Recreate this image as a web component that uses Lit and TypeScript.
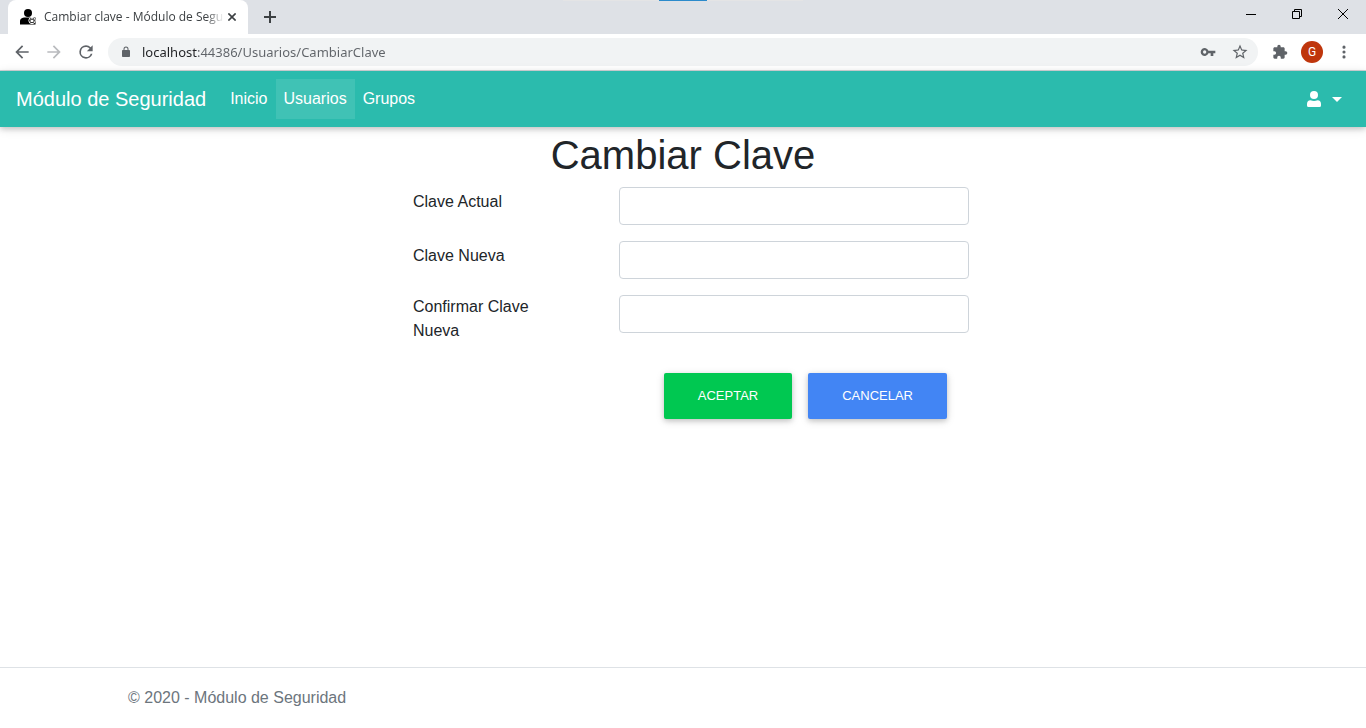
import { LitElement, html, css, svg } from "lit";
import { customElement, property } from "lit/decorators.js";

@customElement("browser-bar")
class BrowserBar extends LitElement {
  @property() pageTitle = "";
  @property() address = "";

  static styles = css`
    :host {
      display: block;
      font-family: "Open Sans", "Noto Sans", sans-serif;
      color: #3c4043;
    }
    * { box-sizing: border-box; }
    svg { display: block; }
    button {
      display: grid;
      place-items: center;
      flex: none;
      margin: 0;
      padding: 0;
      border: 0;
      background: none;
      color: #5f6368;
      font: inherit;
    }
    .strip {
      position: relative;
      display: flex;
      height: 34px;
      padding-left: 8px;
      background: #dee1e6;
    }
    .loading {
      position: absolute;
      top: 0;
      left: calc(50% - 120px);
      width: 240px;
      height: 1px;
      background: linear-gradient(90deg, #e4e4e5 40%, #2b8acb 40% 60%, #e4e4e5 60%);
    }
    .tab {
      display: flex;
      align-items: center;
      width: 240px;
      padding: 0 8px 0 12px;
      border-radius: 8px 8px 0 0;
      background: #fff;
    }
    .title {
      flex: 1;
      margin: 0 0 0 8px;
      overflow: hidden;
      white-space: nowrap;
      font-size: 12px;
      line-height: 16px;
      mask-image: linear-gradient(90deg, #000 90%, transparent);
    }
    .close { width: 16px; height: 16px; color: #3c4043; }
    .add { width: 44px; height: 34px; color: #3c4043; }
    .window { display: flex; margin-left: auto; }
    .window button { width: 46px; height: 28px; color: #000; }
    .tools {
      display: flex;
      align-items: center;
      height: 37px;
      padding: 0 6px;
      border-bottom: 1px solid #d5d7da;
      background: #fff;
    }
    .tools button { width: 32px; height: 32px; }
    .tools .forward { color: #b9bbbe; }
    .omnibox {
      display: flex;
      flex: 1;
      align-items: center;
      height: 28px;
      margin: 0 6px;
      padding: 0 2px 0 12px;
      border-radius: 14px;
      background: #f1f3f4;
      color: #5f6368;
    }
    .omnibox input {
      flex: 1;
      min-width: 0;
      height: 24px;
      margin-left: 10px;
      padding: 0;
      border: 0;
      outline: 0;
      color: #5f6368;
      background: linear-gradient(90deg, #202124 55px, #5f6368 55px);
      -webkit-background-clip: text;
      background-clip: text;
      -webkit-text-fill-color: transparent;
      font: 13px/24px "Noto Sans", "Open Sans", sans-serif;
    }
    .avatar {
      display: grid;
      place-items: center;
      width: 22px;
      height: 22px;
      border-radius: 50%;
      background: #bf360c;
      color: #fff;
      font: 12px/22px Roboto, sans-serif;
    }
  `;

  private icon(d: string, size = 16, box = 24) {
    return html`<svg width=${size} height=${size} viewBox="0 0 ${box} ${box}" fill="currentColor" aria-hidden="true">
      ${svg`<path d=${d}></path>`}
    </svg>`;
  }

  render() {
    return html`
      <div class="strip">
        <div class="loading"></div>
        <div class="tab">
          <svg width="16" height="16" viewBox="0 0 16 16" aria-hidden="true">
            <circle cx="8" cy="4" r="4" fill="#000" />
            <path d="M0 15.500V12Q0 9 4 8.500H15.500V15.500Z" fill="#000" />
            <circle cx="12" cy="11.500" r="3.200" fill="#000" stroke="#fff" stroke-width="1" />
            <path d="M10.500 11h3v2.200h-3z" fill="#fff" />
            <path d="M11 11v-.8a1 1 0 0 1 2 0v.8" fill="none" stroke="#fff" stroke-width=".8" />
          </svg>
          <span class="title">${this.pageTitle}</span>
          <button class="close" aria-label="Cerrar pestaña">
            <svg width="8" height="8" viewBox="0 0 8 8" fill="none" stroke="currentColor" stroke-width="1.600"><path d="M.4.4l7.200 7.200M7.600.4L.4 7.600" /></svg>
          </button>
        </div>
        <button class="add" aria-label="Nueva pestaña">
          <svg width="12" height="12" viewBox="0 0 12 12" fill="none" stroke="currentColor" stroke-width="2"><path d="M6 0v12M0 6h12" /></svg>
        </button>
        <div class="window">
          <button aria-label="Minimizar">
            <svg width="10" height="10" viewBox="0 0 10 10" fill="none" stroke="currentColor"><path d="M0 5.500h10" /></svg>
          </button>
          <button aria-label="Restaurar">
            <svg width="10" height="10" viewBox="0 0 10 10" fill="none" stroke="currentColor"><path d="M.5 2.500h7v7h-7zM2.500 2.500v-2h7v7h-2" /></svg>
          </button>
          <button aria-label="Cerrar">
            <svg width="10" height="10" viewBox="0 0 10 10" fill="none" stroke="currentColor"><path d="M0 0l10 10M10 0L0 10" /></svg>
          </button>
        </div>
      </div>
      <div class="tools">
        <button aria-label="Atrás">${this.icon("M20 11H7.830l5.590-5.590L12 4l-8 8 8 8 1.410-1.410L7.830 13H20v-2z", 20)}</button>
        <button class="forward" aria-label="Adelante">${this.icon("M12 4l-1.410 1.410L16.170 11H4v2h12.170l-5.580 5.590L12 20l8-8z", 20)}</button>
        <button aria-label="Recargar">${this.icon("M17.650 6.350A7.958 7.958 0 0 0 12 4a8 8 0 1 0 7.730 10h-2.080A6 6 0 1 1 12 6c1.660 0 3.140.69 4.220 1.780L13 11h7V4l-2.350 2.350z", 20)}</button>
        <div class="omnibox">
          ${this.icon("M18 8h-1V6A5 5 0 0 0 7 6v2H6c-1.100 0-2 .9-2 2v10c0 1.100.9 2 2 2h12c1.100 0 2-.9 2-2V10c0-1.100-.9-2-2-2zM9 6a3 3 0 0 1 6 0v2H9z", 12)}
          <input type="text" aria-label="Dirección" spellcheck="false" .value=${this.address} />
          <button aria-label="Contraseñas">${this.icon("M12.650 10A6 6 0 1 0 12.650 14H16v4h4v-4h3v-4H12.650zM7 14.500A2.500 2.500 0 1 1 7 9.500a2.500 2.500 0 0 1 0 5z", 16)}</button>
          <button aria-label="Marcador">${this.icon("M22 9.240l-7.190-.62L12 2 9.190 8.630 2 9.240l5.460 4.730L5.820 21 12 17.270 18.180 21l-1.630-7.030L22 9.240zM12 15.400l-3.760 2.270 1-4.280-3.320-2.880 4.380-.38L12 6.100l1.710 4.040 4.380.38-3.320 2.880 1 4.280L12 15.400z", 18)}</button>
        </div>
        <button aria-label="Extensiones">${this.icon("M20.500 11H19V7c0-1.100-.9-2-2-2h-4V3.500a2.500 2.500 0 0 0-5 0V5H4c-1.100 0-1.990.9-1.990 2v3.800H3.500a2.700 2.700 0 0 1 0 5.400H2V20c0 1.100.9 2 2 2h3.800v-1.500a2.700 2.700 0 0 1 5.400 0V22H17c1.100 0 2-.9 2-2v-4h1.500a2.500 2.500 0 0 0 0-5z", 16)}</button>
        <button aria-label="Perfil"><span class="avatar">G</span></button>
        <button aria-label="Menú">${this.icon("M12 7.600a2.100 2.100 0 1 0 0-4.200 2.100 2.100 0 0 0 0 4.200zM12 14.100a2.100 2.100 0 1 0 0-4.200 2.100 2.100 0 0 0 0 4.200zM12 20.600a2.100 2.100 0 1 0 0-4.200 2.100 2.100 0 0 0 0 4.200z", 18)}</button>
      </div>
    `;
  }
}

@customElement("app-root")
class AppRoot extends LitElement {
  static styles = css`
    :host {
      display: flex;
      flex-direction: column;
      min-height: 100vh;
      background: #fff;
      color: #212529;
      font: 16px/24px "Liberation Sans", Arial, sans-serif;
    }
    * { box-sizing: border-box; }
    svg { display: block; }
    a { color: inherit; text-decoration: none; }
    .navbar {
      display: flex;
      align-items: center;
      padding: 8px 16px;
      background: #2bbbad;
      color: #fff;
      box-shadow: 0 2px 5px rgba(0, 0, 0, 0.16), 0 2px 10px rgba(0, 0, 0, 0.12);
    }
    .brand { margin-right: 16px; font-size: 20px; line-height: 30px; }
    .link { padding: 8px; }
    .link.active { background: rgba(255, 255, 255, 0.1); }
    .account {
      display: flex;
      align-items: center;
      gap: 10px;
      margin-left: auto;
      padding: 8px;
      border: 0;
      background: none;
      color: #fff;
    }
    main { flex: 1; }
    h1 {
      margin: 4px 0 8px;
      font-size: 40px;
      font-weight: 400;
      line-height: 48px;
      text-align: center;
    }
    form {
      display: flex;
      flex-direction: column;
      gap: 16px;
      width: 100%;
      max-width: 572px;
      margin: 0 auto;
      padding-left: 16px;
    }
    .row {
      display: grid;
      grid-template-columns: 160px 350px;
      align-items: start;
      justify-content: space-between;
    }
    label {
      display: flex;
      align-items: center;
      min-height: 30px;
      padding-right: 30px;
    }
    .row input {
      width: 100%;
      height: 38px;
      padding: 6px 12px;
      border: 1px solid #ced4da;
      border-radius: 4px;
      background: #fff;
      font: inherit;
    }
    .actions {
      display: flex;
      justify-content: flex-end;
      gap: 16px;
      padding: 14px 22px 0 0;
    }
    .btn {
      padding: 13px 34px;
      border: 0;
      border-radius: 2px;
      color: #fff;
      font: 13px/20px "Liberation Sans", Arial, sans-serif;
      text-transform: uppercase;
      box-shadow: 0 2px 5px rgba(0, 0, 0, 0.16), 0 2px 10px rgba(0, 0, 0, 0.12);
    }
    .accept { background: #00c851; }
    .cancel { background: #4285f4; }
    footer {
      border-top: 1px solid #dee2e6;
      color: #6c757d;
      line-height: 60px;
    }
    .container {
      max-width: 1140px;
      margin: 0 auto;
      padding: 0 15px;
    }
  `;

  private fields = [
    { id: "actual", label: "Clave Actual" },
    { id: "nueva", label: "Clave Nueva" },
    { id: "confirmar", label: "Confirmar Clave Nueva" },
  ];

  render() {
    return html`
      <browser-bar
        .pageTitle=${"Cambiar clave - Módulo de Segu"}
        .address=${"localhost:44386/Usuarios/CambiarClave"}
      ></browser-bar>
      <nav class="navbar">
        <a class="brand" href="#">Módulo de Seguridad</a>
        <a class="link" href="#">Inicio</a>
        <a class="link active" href="#">Usuarios</a>
        <a class="link" href="#">Grupos</a>
        <button class="account" aria-label="Cuenta">
          <svg width="16" height="16" viewBox="0 0 16 16" fill="currentColor" aria-hidden="true">
            <circle cx="8" cy="4" r="4" />
            <path d="M4.500 9.200Q8 10.700 11.500 9.200Q15 9.500 15 13V14.500Q15 16 13.500 16H2.500Q1 16 1 14.500V13Q1 9.500 4.500 9.200Z" />
          </svg>
          <svg width="10" height="5" viewBox="0 0 10 5" fill="currentColor" aria-hidden="true"><path d="M0 0H10L5 5Z" /></svg>
        </button>
      </nav>
      <main>
        <h1>Cambiar Clave</h1>
        <form>
          ${this.fields.map(
            (f) => html`<div class="row">
              <label for=${f.id}>${f.label}</label>
              <input id=${f.id} type="password" />
            </div>`
          )}
          <div class="actions">
            <button class="btn accept" type="button">Aceptar</button>
            <button class="btn cancel" type="button">Cancelar</button>
          </div>
        </form>
      </main>
      <footer><div class="container">© 2020 - Módulo de Seguridad</div></footer>
    `;
  }
}
